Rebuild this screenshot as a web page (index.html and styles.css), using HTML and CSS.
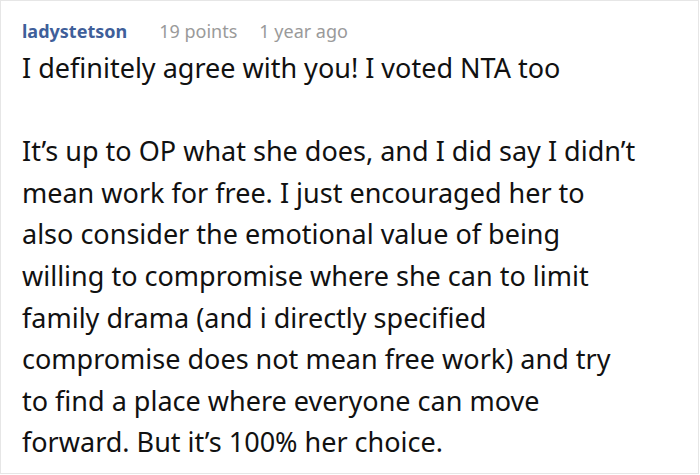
FILE: index.html
```html
<!DOCTYPE html>
<html>
<head>
<meta charset="utf-8">
<link rel="stylesheet" href="styles.css">
</head>
<body>
<div class="card">
  <div class="meta">
    <span class="author">ladystetson</span>
    <span class="points">19 points</span>
    <span class="time">1 year ago</span>
  </div>
  <div class="text">
    <p>I definitely agree with you! I voted NTA too</p>
    <p>It’s up to OP what she does, and I did say I didn’t mean work for free. I just encouraged her to also consider the emotional value of being willing to compromise where she can to limit family drama (and i directly specified compromise does not mean free work) and try to find a place where everyone can move forward. But it’s 100% her choice.</p>
  </div>
</div>
</body>
</html>
```
FILE: styles.css
```css
html, body {
  margin: 0;
  padding: 0;
  background: #ffffff;
}
body {
  font-family: "Noto Sans", "Open Sans", sans-serif;
  color: #111111;
}
.card {
  box-sizing: border-box;
  width: 699px;
  height: 474px;
  border: 1px solid #e6e6e6;
  padding: 19px 0 0 21px;
}
.meta {
  display: flex;
  align-items: baseline;
  font-size: 18px;
  line-height: 22px;
}
.author {
  color: #3f5f9a;
  font-weight: 700;
  margin-right: 32px;
}
.points {
  color: #9a9a9a;
  margin-right: 22px;
}
.time {
  color: #9a9a9a;
}
.text {
  width: 617px;
  font-size: 27px;
  line-height: 41.6px;
  margin-top: 5px;
}
.text p {
  margin: 0 0 41.6px 0;
}
```
